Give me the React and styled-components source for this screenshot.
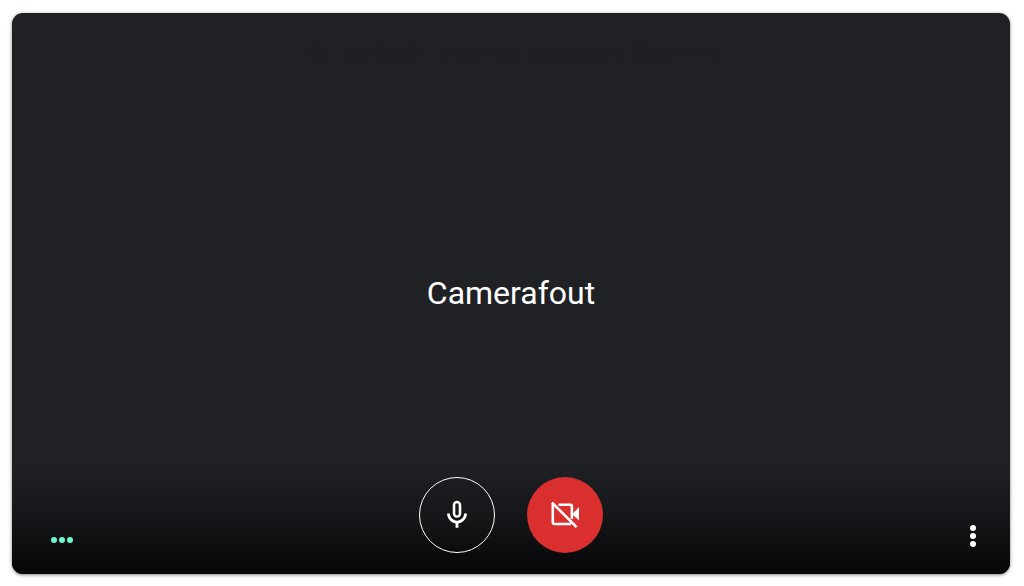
import React from "react";
import styled, { createGlobalStyle } from "styled-components";

const GlobalStyle = createGlobalStyle`
  *, *::before, *::after { box-sizing: border-box; }
  body { margin: 0; background: #fff; font-family: Roboto, "Liberation Sans", sans-serif; }
`;

const Page = styled.main`
  padding: 13px 14px 12px 12px;
`;

const Preview = styled.section`
  display: flex;
  flex-direction: column;
  aspect-ratio: 16 / 9;
  width: 100%;
  border-radius: 11px;
  overflow: hidden;
  background: #202125;
  color: #fff;
  box-shadow: 0 1px 3px rgba(60, 64, 67, 0.5), 0 1px 5px rgba(60, 64, 67, 0.2);
`;

const DeviceNotice = styled.div`
  display: flex;
  align-items: center;
  justify-content: center;
  gap: 16px;
  height: 80px;
  flex: none;
  font-size: 24px;
  line-height: 24px;
  color: #1f2024;
`;

const Stage = styled.div`
  flex: 1;
  display: flex;
  align-items: center;
  justify-content: center;
  padding-top: 30px;
`;

const Message = styled.h1`
  margin: 0;
  font-size: 32px;
  line-height: 40px;
  font-weight: 400;
`;

const Footer = styled.footer`
  display: grid;
  grid-template-columns: 1fr auto 1fr;
  align-items: end;
  height: 112px;
  flex: none;
  padding: 0 32px 21px;
  background: linear-gradient(to bottom, #202125 0%, #16171a 45%, #060607 100%);
`;

const Controls = styled.div`
  display: flex;
  gap: 32px;
`;

const RoundButton = styled.button`
  display: flex;
  align-items: center;
  justify-content: center;
  width: 76px;
  height: 76px;
  padding: 0;
  border-radius: 50%;
  border: ${(p) => (p.$off ? "0" : "1px solid #fff")};
  background: ${(p) => (p.$off ? "#d9302f" : "transparent")};
  color: #fff;
  cursor: pointer;
`;

const AudioLevel = styled.div`
  display: flex;
  gap: 2px;
  width: 36px;
  height: 26px;
  align-items: center;
  justify-content: center;
`;

const LevelDot = styled.span`
  width: 6px;
  height: 6px;
  border-radius: 50%;
  background: #6ff5cf;
`;

const MoreButton = styled.button`
  justify-self: end;
  display: flex;
  align-items: center;
  justify-content: center;
  width: 10px;
  height: 34px;
  padding: 0;
  border: 0;
  background: transparent;
  color: #fff;
  cursor: pointer;
`;

const SpeakerIcon = () => (
  <svg width="26" height="26" viewBox="0 0 24 24" fill="currentColor" aria-hidden="true">
    <path d="M3 9v6h4l5 5V4L7 9H3zm7-.17v6.34L7.83 13H5v-2h2.83L10 8.83zM16.5 12A4.5 4.5 0 0 0 14 7.97v8.05A4.5 4.5 0 0 0 16.5 12zM14 3.23v2.06a7 7 0 0 1 0 13.42v2.06a9 9 0 0 0 0-17.54z" />
  </svg>
);

const MicIcon = () => (
  <svg width="34" height="34" viewBox="0 0 24 24" fill="currentColor" aria-hidden="true">
    <path d="M12 14c1.66 0 3-1.34 3-3V5c0-1.66-1.34-3-3-3S9 3.34 9 5v6c0 1.66 1.34 3 3 3zm-1.2-9.1c0-.66.54-1.2 1.2-1.2s1.2.54 1.2 1.2l-.01 6.2c0 .66-.53 1.2-1.19 1.2s-1.2-.54-1.2-1.2V4.9zM17 11c0 2.76-2.24 5-5 5s-5-2.24-5-5H5c0 3.53 2.61 6.43 6 6.92V21h2v-3.08c3.39-.49 6-3.39 6-6.92h-2z" />
  </svg>
);

const CameraOffIcon = () => (
  <svg width="32" height="32" viewBox="0 0 32 32" fill="none" stroke="currentColor" strokeWidth="2.6" aria-hidden="true">
    <path d="M3.8 4.6v18.9a1.5 1.5 0 0 0 1.5 1.5H22" />
    <path d="M9.6 5.8h11.7a1.6 1.6 0 0 1 1.6 1.6v12.7" />
    <path d="M3 3.6 27.6 28.2" />
    <path d="M23.5 15 30 8v13.4l-6.5-6z" fill="currentColor" stroke="none" />
  </svg>
);

const MoreIcon = () => (
  <svg width="8" height="24" viewBox="0 0 8 24" fill="currentColor" aria-hidden="true">
    <circle cx="4" cy="4" r="3" />
    <circle cx="4" cy="12" r="3" />
    <circle cx="4" cy="20" r="3" />
  </svg>
);

export default function App() {
  return (
    <>
      <GlobalStyle />
      <Page>
        <Preview>
          <DeviceNotice>
            <SpeakerIcon />
            <span>Default - Internal speakers (Built-in)</span>
          </DeviceNotice>
          <Stage>
            <Message>Camerafout</Message>
          </Stage>
          <Footer>
            <AudioLevel>
              <LevelDot />
              <LevelDot />
              <LevelDot />
            </AudioLevel>
            <Controls>
              <RoundButton type="button" aria-label="Microfoon uitzetten">
                <MicIcon />
              </RoundButton>
              <RoundButton type="button" $off aria-label="Camera aanzetten">
                <CameraOffIcon />
              </RoundButton>
            </Controls>
            <MoreButton type="button" aria-label="Meer opties">
              <MoreIcon />
            </MoreButton>
          </Footer>
        </Preview>
      </Page>
    </>
  );
}
